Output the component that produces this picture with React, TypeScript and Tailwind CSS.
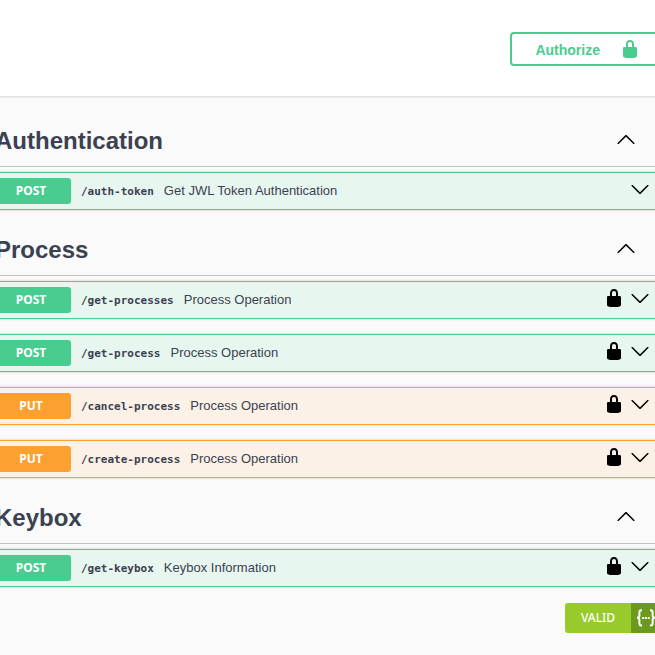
import clsx from 'clsx';

type Method = 'POST' | 'PUT';

interface Operation {
  method: Method;
  path: string;
  summary: string;
  secured?: boolean;
}

interface Tag {
  name: string;
  operations: Operation[];
}

const tags: Tag[] = [
  {
    name: 'Authentication',
    operations: [{ method: 'POST', path: '/auth-token', summary: 'Get JWL Token Authentication' }],
  },
  {
    name: 'Process',
    operations: [
      { method: 'POST', path: '/get-processes', summary: 'Process Operation', secured: true },
      { method: 'POST', path: '/get-process', summary: 'Process Operation', secured: true },
      { method: 'PUT', path: '/cancel-process', summary: 'Process Operation', secured: true },
      { method: 'PUT', path: '/create-process', summary: 'Process Operation', secured: true },
    ],
  },
  {
    name: 'Keybox',
    operations: [{ method: 'POST', path: '/get-keybox', summary: 'Keybox Information', secured: true }],
  },
];

const methodStyles: Record<Method, { row: string; badge: string }> = {
  POST: { row: 'border-[#49cc90] bg-[#e8f6f0]', badge: 'bg-[#49cc90]' },
  PUT: { row: 'border-[#fca130] bg-[#fbf1e6]', badge: 'bg-[#fca130]' },
};

function LockIcon() {
  return (
    <svg className="size-5 shrink-0" viewBox="0 0 20 20" fill="currentColor" aria-hidden="true">
      <path d="M15.8 8H14V5.6C14 2.703 12.665 1 10 1 7.334 1 6 2.703 6 5.6V8H4c-.553 0-1 .646-1 1.199V17c0 .549.428 1.139.951 1.307l1.197.387C5.672 18.861 6.55 19 7.1 19h5.8c.549 0 1.428-.139 1.951-.307l1.196-.387c.524-.167.953-.757.953-1.306V9.199C17 8.646 16.352 8 15.8 8zM12 8H8V5.199C8 3.754 8.797 3 10 3c1.203 0 2 .754 2 2.199V8z" />
    </svg>
  );
}

function ChevronIcon({ up = false }: { up?: boolean }) {
  return (
    <svg
      className={clsx('size-5 shrink-0', up && 'rotate-180')}
      viewBox="0 0 20 20"
      fill="currentColor"
      aria-hidden="true"
    >
      <path d="M17.418 6.109c.272-.268.709-.268.979 0s.271.701 0 .969l-7.908 7.83c-.27.268-.707.268-.979 0l-7.908-7.83c-.27-.268-.27-.701 0-.969.271-.268.709-.268.979 0L10 13.25l7.418-7.141z" />
    </svg>
  );
}

function BracesIcon() {
  return (
    <svg className="h-5 w-[20px] shrink-0" viewBox="0 0 20 20" fill="none" stroke="currentColor" aria-hidden="true">
      <path
        d="M6 2.2H5.2Q3.4 2.2 3.4 4.2V7.4Q3.4 9.8 1 9.8Q3.4 9.8 3.4 12.2V15.4Q3.4 17.4 5.2 17.4H6M14 2.2h.8Q16.6 2.2 16.6 4.2V7.4Q16.6 9.8 19 9.8Q16.6 9.8 16.6 12.2V15.4Q16.6 17.4 14.8 17.4H14"
        strokeWidth="2"
      />
      <path d="M6.2 9.9h2M9 9.9h2M11.8 9.9h2" strokeWidth="2" />
    </svg>
  );
}

function OperationRow({ operation }: { operation: Operation }) {
  const styles = methodStyles[operation.method];

  return (
    <div
      className={clsx(
        'flex h-[38px] items-center rounded border pr-[20px] pl-1.5 shadow-[0_0_3px_rgba(0,0,0,0.19)]',
        styles.row,
      )}
    >
      <button type="button" className="flex min-w-0 flex-1 items-center text-left">
        <span
          className={clsx(
            'w-20 shrink-0 rounded-[3px] text-center font-["Noto_Sans",sans-serif] text-xs leading-[26px] font-bold text-white',
            styles.badge,
          )}
        >
          {operation.method}
        </span>
        <span className='px-2.5 pt-0.5 font-["DejaVu_Sans_Mono",monospace] text-[11px] font-bold whitespace-nowrap'>
          {operation.path}
        </span>
        <span className="truncate text-[13px]">{operation.summary}</span>
      </button>
      <div className="flex items-center gap-1.5 pb-1 text-black">
        {operation.secured && (
          <button type="button" aria-label="Authorization required">
            <LockIcon />
          </button>
        )}
        <button type="button" aria-label={`Expand ${operation.path}`}>
          <ChevronIcon />
        </button>
      </div>
    </div>
  );
}

function TagSection({ tag }: { tag: Tag }) {
  return (
    <section>
      <div className="mb-[5px] flex items-center justify-between border-b border-[#3b4151]/30 pt-[11px] pr-[35px] pb-[9px] pl-[11px]">
        <h3 className="text-2xl font-bold">{tag.name}</h3>
        <button type="button" className="pb-0.5 text-black" aria-label={`Collapse ${tag.name}`}>
          <ChevronIcon up />
        </button>
      </div>
      <div className="flex flex-col gap-[15px]">
        {tag.operations.map((operation) => (
          <OperationRow key={operation.path} operation={operation} />
        ))}
      </div>
    </section>
  );
}

export default function App() {
  return (
    <div className='min-h-screen overflow-hidden bg-[#fafafa] font-["Liberation_Sans",sans-serif] text-[#3b4151]'>
      <header className="-mx-4 flex justify-end bg-white pt-8 pb-[30px] shadow-[0_1px_2px_rgba(0,0,0,0.15)]">
        <button
          type="button"
          className="flex h-[34px] items-center gap-5 rounded border-2 border-[#49cc90] pr-[29px] pl-[23px] text-sm font-bold text-[#49cc90]"
        >
          <span className="pt-0.5">Authorize</span>
          <LockIcon />
        </button>
      </header>

      <main className="-mx-4 flex flex-col gap-[13px] pt-[18px]">
        {tags.map((tag) => (
          <TagSection key={tag.name} tag={tag} />
        ))}
      </main>

      <footer className="-mr-4 flex justify-end pt-4 pr-2.5">
        <a
          href="#validator"
          className='flex h-[30px] overflow-hidden rounded-[3px] font-["Noto_Sans",sans-serif] text-xs font-medium text-white'
        >
          <span className="flex w-[66px] items-center justify-center bg-[#97ca2a]">VALID</span>
          <span className="flex w-[30px] items-center justify-center bg-[#6c9a1f]">
            <BracesIcon />
          </span>
        </a>
      </footer>
    </div>
  );
}
